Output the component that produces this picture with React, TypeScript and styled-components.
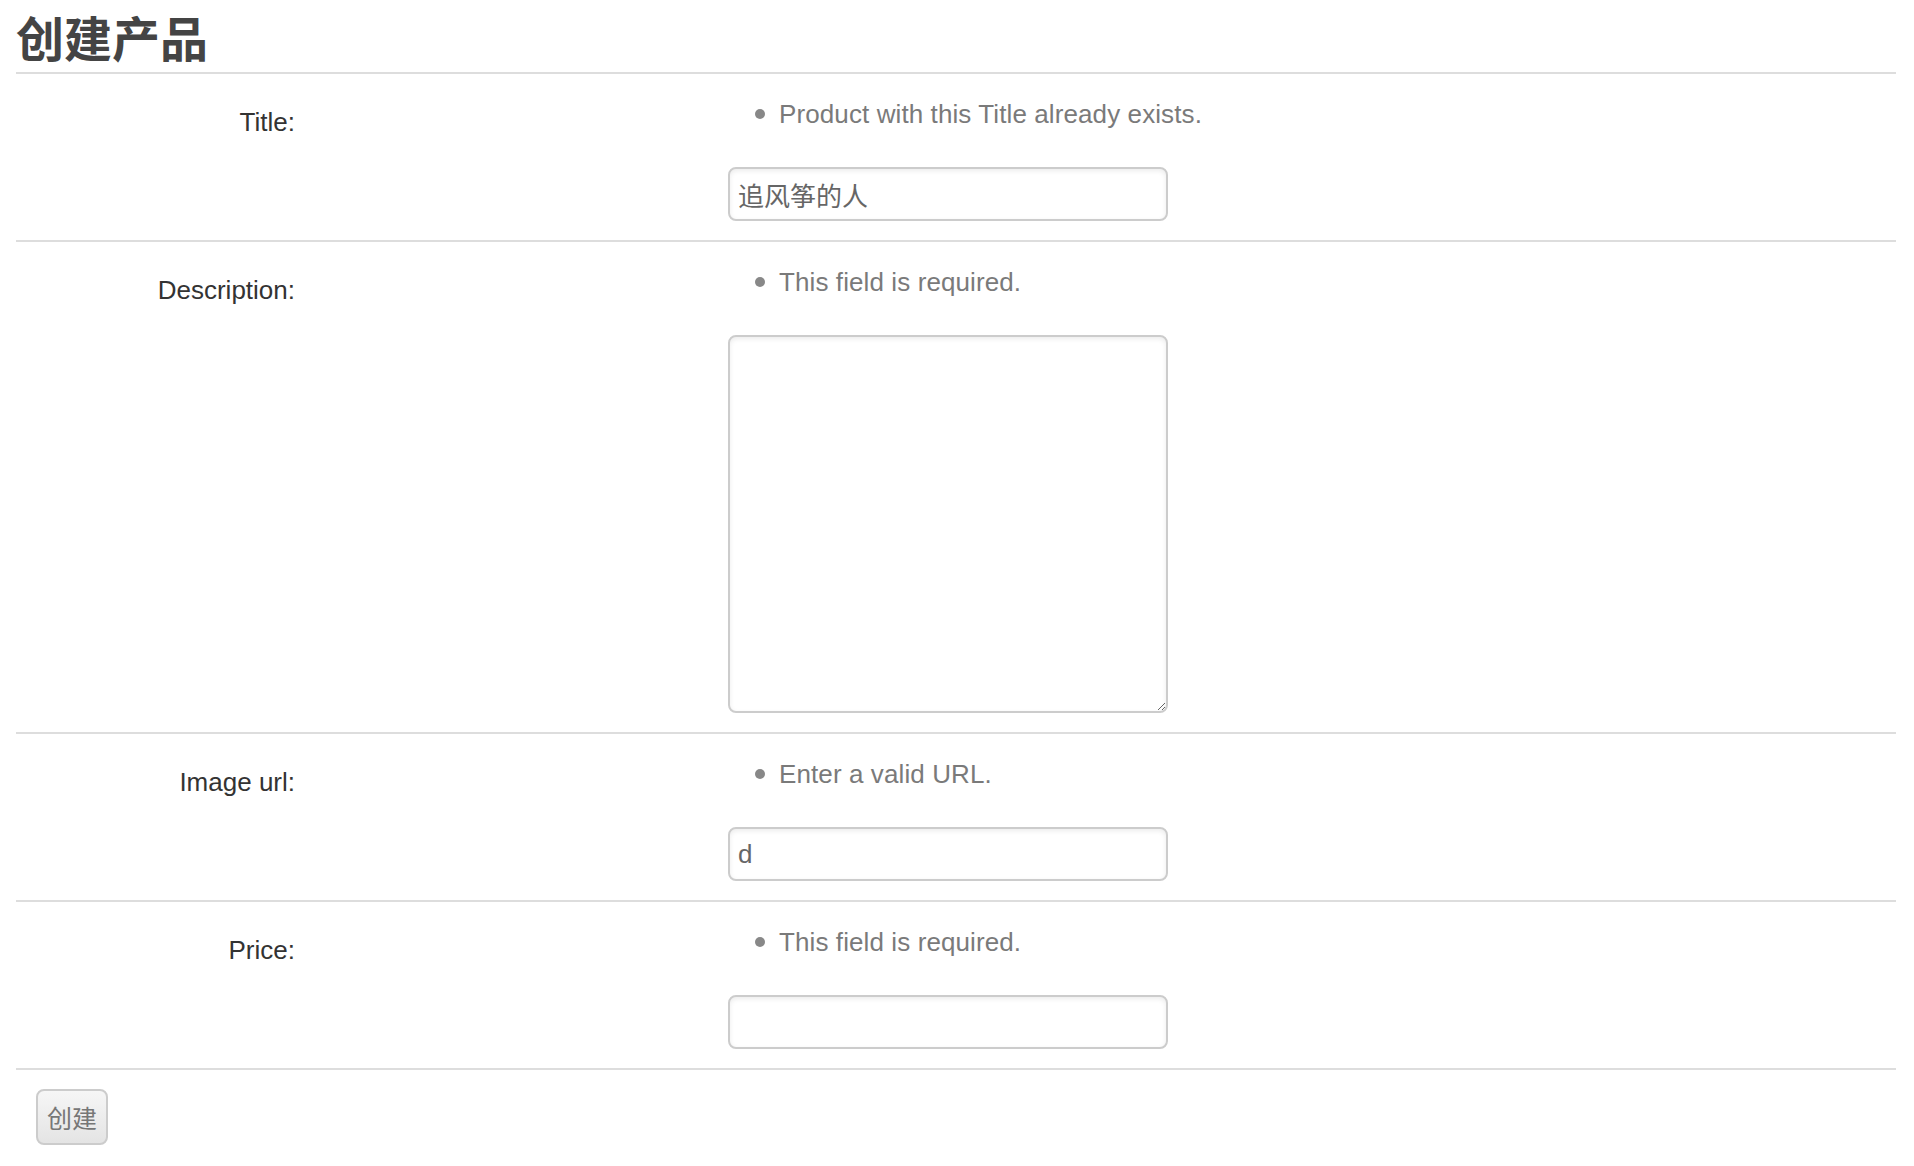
import React from 'react';
import styled, {createGlobalStyle} from "styled-components";

const GlobalStyle = createGlobalStyle`
    body {
        margin: 0;
        background: #fff;
        font-family: "Liberation Sans", Arial, "Noto Sans CJK SC", sans-serif;
        color: #333;
    }
`

type Field = {
    label: string
    error: string
    kind: 'input' | 'textarea'
    value?: string
}

const fields: Field[] = [
    {label: 'Title:', error: 'Product with this Title already exists.', kind: 'input', value: '追风筝的人'},
    {label: 'Description:', error: 'This field is required.', kind: 'textarea'},
    {label: 'Image url:', error: 'Enter a valid URL.', kind: 'input', value: 'd'},
    {label: 'Price:', error: 'This field is required.', kind: 'input'},
];

export default function App() {
    return (
        <>
            <GlobalStyle/>
            <Page>
                <Heading>创建产品</Heading>
                <form onSubmit={e => e.preventDefault()}>
                    {fields.map(f => (
                        <Row key={f.label}>
                            <Label>{f.label}</Label>
                            <FieldCell>
                                <ErrorList>
                                    <ErrorItem>{f.error}</ErrorItem>
                                </ErrorList>
                                {f.kind === 'textarea'
                                    ? <TextArea defaultValue=""/>
                                    : <TextInput type="text" defaultValue={f.value ?? ''}/>}
                            </FieldCell>
                        </Row>
                    ))}
                    <Actions>
                        <SubmitButton type="submit">创建</SubmitButton>
                    </Actions>
                </form>
            </Page>
        </>
    );
}

const Page = styled.div`
    padding: 0 18px 0 16px;
`

const Heading = styled.h1`
    margin: 0;
    padding: 8px 0 8px;
    font-family: "Noto Sans CJK SC", "Liberation Sans", sans-serif;
    font-size: 48px;
    font-weight: 700;
    line-height: 56px;
    color: #444;
    border-bottom: 2px solid #ddd;
`

const Row = styled.div`
    display: grid;
    grid-template-columns: 279px 1fr;
    column-gap: 433px;
    padding: 22px 0 19px;
    border-bottom: 2px solid #ddd;
`

const Label = styled.div`
    padding-top: 8px;
    text-align: right;
    font-size: 26px;
    line-height: 36px;
    color: #333;
`

const FieldCell = styled.div`
    display: flex;
    flex-direction: column;
    align-items: flex-start;
`

const ErrorList = styled.ul`
    list-style: none;
    margin: 0 0 35px;
    padding: 0;
`

const ErrorItem = styled.li`
    display: flex;
    align-items: center;
    font-size: 26px;
    line-height: 36px;
    letter-spacing: 0.1px;
    color: #7a7a7a;

    &::before {
        content: "";
        width: 10px;
        height: 10px;
        border-radius: 50%;
        background: #888;
        margin: 0 14px 0 27px;
    }
`

const fieldBase = `
    box-sizing: border-box;
    width: 440px;
    border: 2px solid #ccc;
    border-radius: 8px;
    background: #fff;
    box-shadow: inset 0 2px 5px rgba(0, 0, 0, 0.08);
    font-family: "Liberation Sans", Arial, "Noto Sans CJK SC", sans-serif;
    font-size: 26px;
    color: #666;
    outline: none;
`

const TextInput = styled.input`
    ${fieldBase};
    display: block;
    height: 54px;
    padding: 0 8px;
`

const TextArea = styled.textarea`
    ${fieldBase};
    display: block;
    height: 378px;
    padding: 8px;
`

const Actions = styled.div`
    padding: 19px 0 20px 20px;
`

const SubmitButton = styled.button`
    box-sizing: border-box;
    width: 72px;
    height: 56px;
    padding: 0;
    border: 2px solid #ccc;
    border-radius: 8px;
    background: linear-gradient(#f6f6f6, #e4e4e4);
    font-family: "Noto Sans CJK SC", "Liberation Sans", sans-serif;
    font-size: 25px;
    color: #777;
    cursor: pointer;
`
